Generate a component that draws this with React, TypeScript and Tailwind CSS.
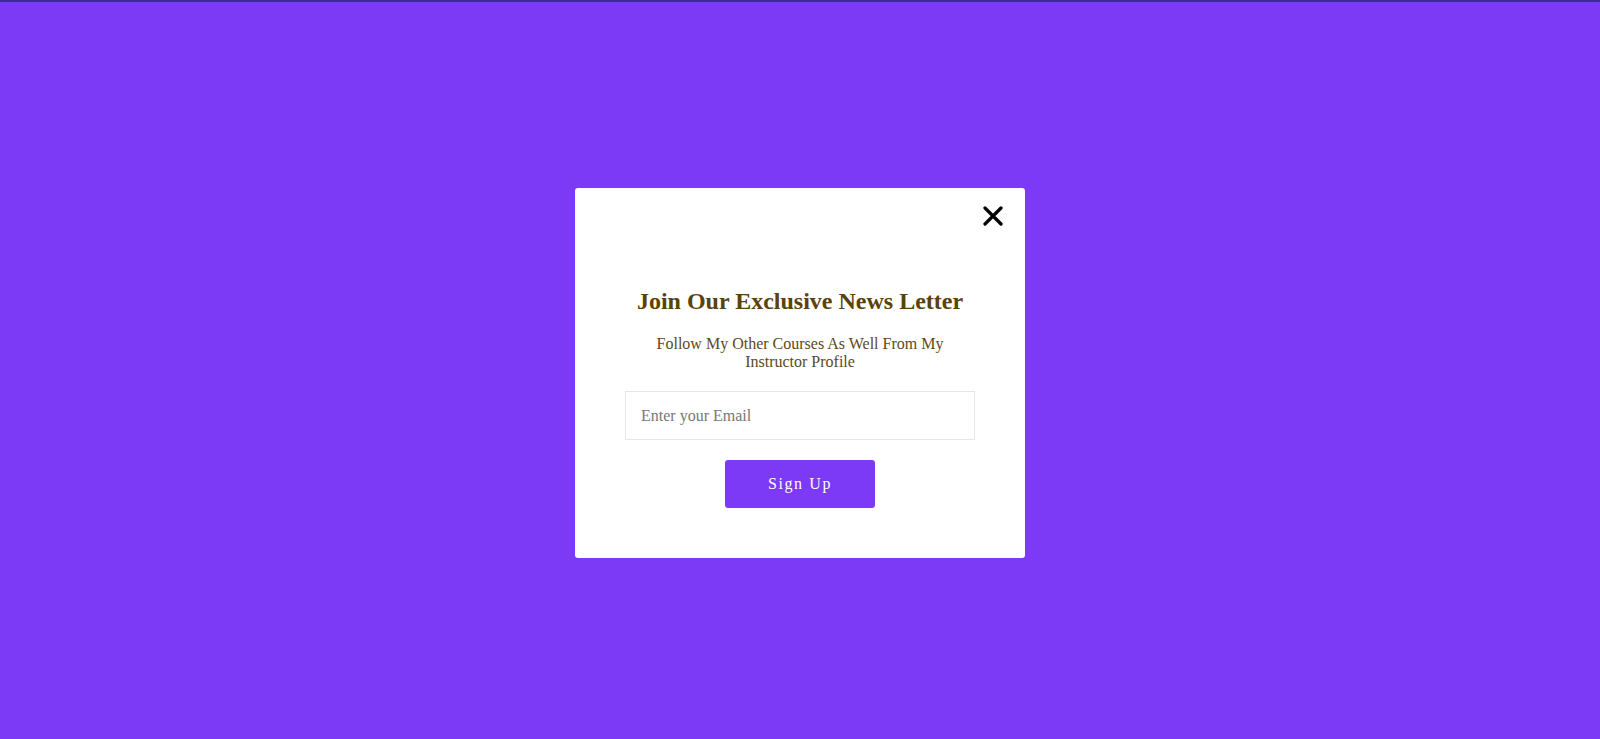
import { useState } from "react";

function CloseIcon() {
  return (
    <svg width="20" height="20" viewBox="0 0 20 20" fill="none">
      <path
        d="M2 2L18 18M18 2L2 18"
        stroke="#000"
        strokeWidth="3.2"
        strokeLinecap="round"
      />
    </svg>
  );
}

export default function App() {
  const [email, setEmail] = useState("");

  return (
    <div className="min-h-screen bg-[#7c3af7] border-t-2 border-[#3a2aa0] flex items-start justify-center font-['Liberation_Serif',serif]">
      <div className="relative mt-[186px] w-[450px] bg-white rounded-[3px] flex flex-col items-center pt-[100px] pb-[50px]">
        <button className="absolute top-[18px] right-[22px]">
          <CloseIcon />
        </button>
        <h2 className="text-[24px] font-bold text-[#5b4208] leading-[1.15]">
          Join Our Exclusive News Letter
        </h2>
        <p className="mt-[19px] w-[300px] text-center text-[16px] leading-[1.15] text-[#5b4a1a]">
          Follow My Other Courses As Well From My Instructor Profile
        </p>
        <input
          type="email"
          value={email}
          onChange={(e) => setEmail(e.target.value)}
          placeholder="Enter your Email"
          className="mt-[20px] w-[350px] h-[49px] border border-[#e6e6e6] px-[15px] text-[16px] text-[#555] placeholder:text-[#777] outline-none"
        />
        <button className="mt-[20px] w-[150px] h-[48px] bg-[#7c3af7] text-white rounded-[3px] text-[16px] tracking-[1.6px]">
          Sign Up
        </button>
      </div>
    </div>
  );
}
